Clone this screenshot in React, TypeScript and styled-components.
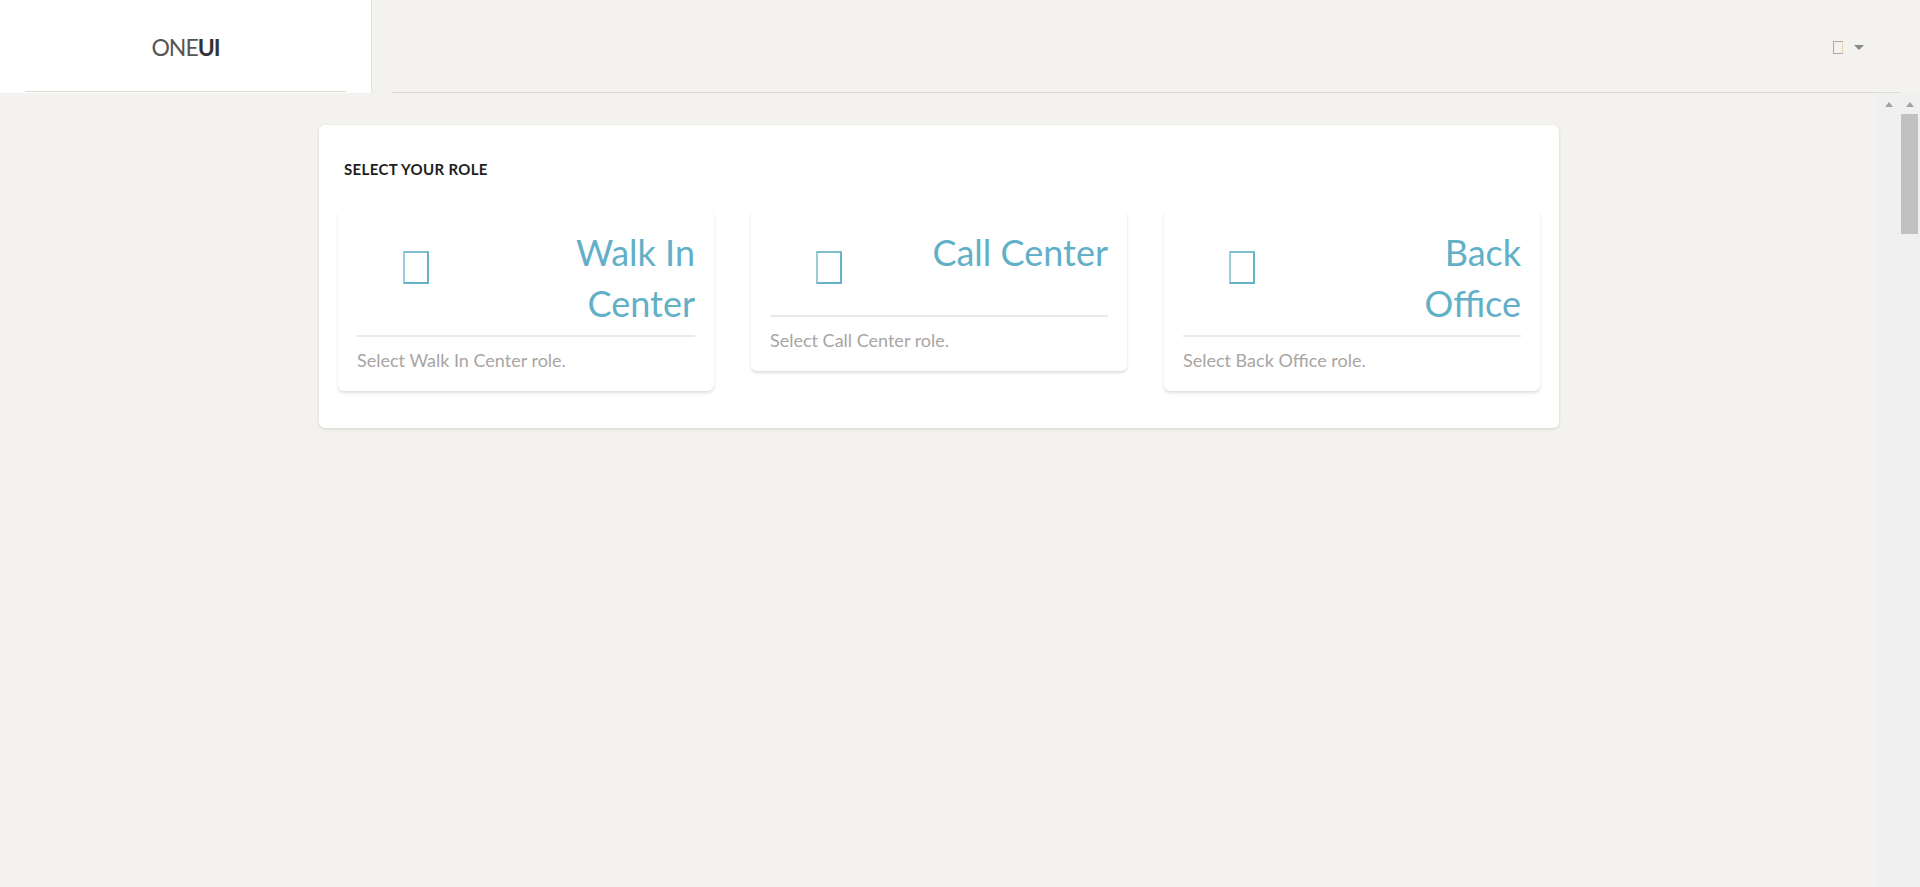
import React from "react";
import styled, { createGlobalStyle } from "styled-components";

const Global = createGlobalStyle`
  html, body { margin: 0; padding: 0; height: 100%; overflow: hidden; }
  body { background: #f3f2ef; font-family: "Lato", "Noto Sans", sans-serif; }
  #root { height: 100%; }
`;

const Shell = styled.div`
  display: flex;
  flex-direction: column;
  height: 100vh;
`;

const Header = styled.header`
  display: flex;
  height: 93px;
  flex-shrink: 0;
  background: #f3f2ef;
`;

const LogoBox = styled.div`
  width: 372px;
  height: 93px;
  box-sizing: border-box;
  background: #fff;
  border-right: 1px solid #e2e1de;
  display: flex;
  flex-direction: column;
`;

const LogoText = styled.div`
  flex: 1;
  display: flex;
  align-items: center;
  justify-content: center;
  font-size: 23px;
  color: #555;
  font-weight: 400;
  letter-spacing: -1px;
  padding-top: 2px;
  b { font-weight: 700; color: #333; }
`;

const LogoRule = styled.div`
  margin: 0 25px 1px;
  height: 1px;
  background: #dcdbd8;
`;

const TopBar = styled.div`
  flex: 1;
  margin: 0 20px 0 20px;
  height: 92px;
  border-bottom: 1px solid #dcdbd8;
  display: flex;
  align-items: center;
  justify-content: flex-end;
  padding-right: 36px;
  box-sizing: content-box;
`;

const UserMenu = styled.div`
  display: flex;
  align-items: center;
  gap: 11px;
  margin-top: 2px;
`;

const UserGlyph = styled.span`
  width: 10px;
  height: 13px;
  box-sizing: border-box;
  border: 1px solid #aaa;
  border-right-color: #e6d3a8;
`;

const Caret = styled.span`
  width: 0;
  height: 0;
  border-left: 5px solid transparent;
  border-right: 5px solid transparent;
  border-top: 5px solid #8a8a8a;
`;

const Body = styled.div`
  flex: 1;
  display: flex;
  min-height: 0;
`;

const Main = styled.main`
  flex: 1;
  display: flex;
  justify-content: center;
  align-items: flex-start;
  padding-top: 32px;
`;

const Rail = styled.div<{ $w: number }>`
  width: ${(p) => p.$w}px;
  background: #f0f0f0;
  display: flex;
  flex-direction: column;
  align-items: center;
  padding-top: 9px;
  box-sizing: border-box;
`;

const RailArrow = styled.span`
  width: 0;
  height: 0;
  border-left: 4.5px solid transparent;
  border-right: 4.5px solid transparent;
  border-bottom: 5px solid #a3a3a3;
`;

const Thumb = styled.div`
  margin-top: 7px;
  width: 17px;
  height: 120px;
  background: #c1c1c1;
  align-self: flex-start;
  margin-left: 1px;
`;

const Panel = styled.section`
  width: 1240px;
  box-sizing: border-box;
  background: #fff;
  border-radius: 6px;
  box-shadow: 0 1px 3px rgba(120, 110, 100, 0.25);
  padding: 34px 19px 37px;
`;

const PanelTitle = styled.h2`
  margin: 0 0 31px 6px;
  font-size: 15px;
  line-height: 20px;
  font-weight: 700;
  color: #1e1e1e;
  letter-spacing: 0.35px;
`;

const Grid = styled.div`
  display: grid;
  grid-template-columns: repeat(3, 376px);
  column-gap: 37px;
  align-items: start;
`;

const Card = styled.div`
  background: #fff;
  border-radius: 6px;
  box-shadow: 0 2px 3px rgba(120, 110, 100, 0.22), 0 0 1px rgba(0, 0, 0, 0.05);
  padding: 17px 19px 19px;
`;

const CardHead = styled.div`
  display: flex;
  justify-content: space-between;
  align-items: flex-start;
`;

const IconCol = styled.div`
  width: 118px;
  height: 82px;
  display: flex;
  justify-content: center;
  padding-top: 24px;
  box-sizing: border-box;
`;

const IconGlyph = styled.span`
  width: 26px;
  height: 33px;
  box-sizing: border-box;
  border: 2px solid #66b2c9;
  border-left-color: #9ccbdb;
  border-top-color: #7fbdd0;
`;

const CardTitle = styled.div`
  text-align: right;
  font-size: 36px;
  line-height: 51px;
  color: #62b0c8;
  font-weight: 400;
  max-width: 178px;
`;

const Divider = styled.div`
  height: 2px;
  background: #ece9e5;
  margin-top: 6px;
`;

const CardText = styled.p`
  margin: 11px 0 0;
  font-size: 18px;
  line-height: 24px;
  color: #a8a5a3;
`;

const roles = [
  { title: "Walk In Center", text: "Select Walk In Center role." },
  { title: "Call Center", text: "Select Call Center role." },
  { title: "Back Office", text: "Select Back Office role." },
];

export default function App() {
  return (
    <>
      <Global />
      <Shell>
        <Header>
          <LogoBox>
            <LogoText>
              ONE<b>UI</b>
            </LogoText>
            <LogoRule />
          </LogoBox>
          <TopBar>
            <UserMenu>
              <UserGlyph />
              <Caret />
            </UserMenu>
          </TopBar>
        </Header>
        <Body>
          <Main>
            <Panel>
              <PanelTitle>SELECT YOUR ROLE</PanelTitle>
              <Grid>
                {roles.map((r) => (
                  <Card key={r.title}>
                    <CardHead>
                      <IconCol>
                        <IconGlyph />
                      </IconCol>
                      <CardTitle>{r.title}</CardTitle>
                    </CardHead>
                    <Divider />
                    <CardText>{r.text}</CardText>
                  </Card>
                ))}
              </Grid>
            </Panel>
          </Main>
          <Rail $w={22}>
            <RailArrow />
          </Rail>
          <Rail $w={20}>
            <RailArrow />
            <Thumb />
          </Rail>
        </Body>
      </Shell>
    </>
  );
}
